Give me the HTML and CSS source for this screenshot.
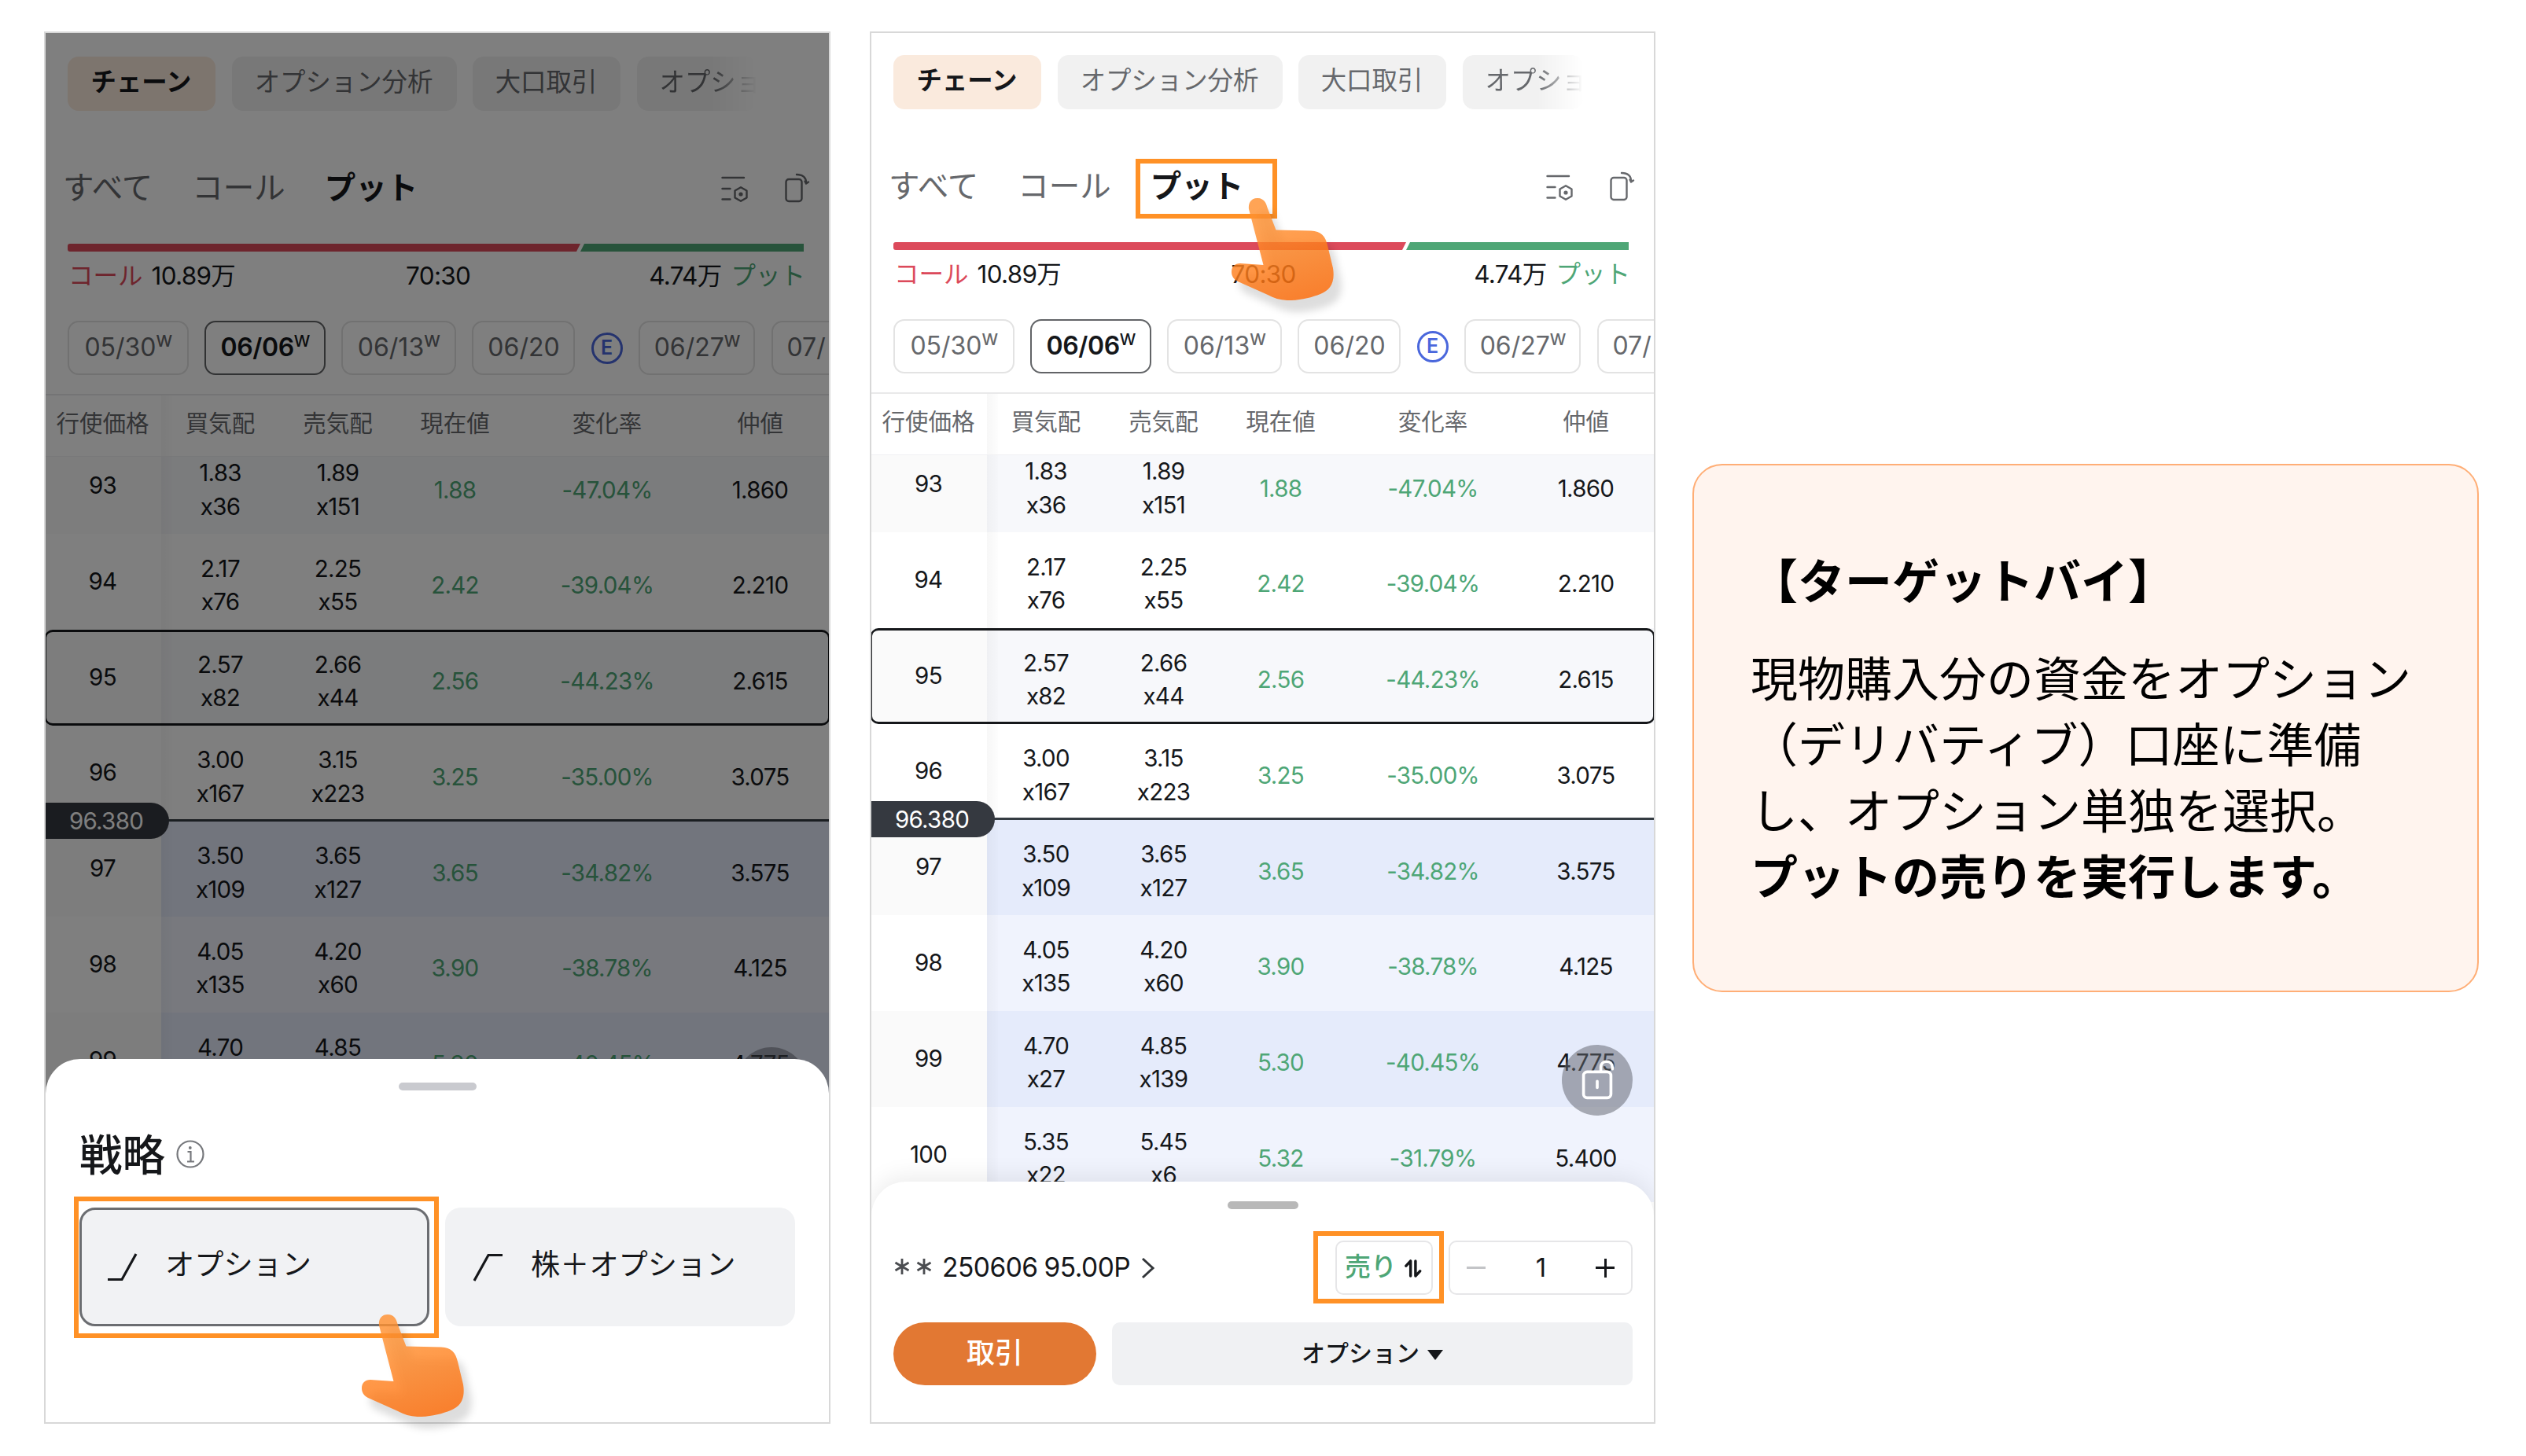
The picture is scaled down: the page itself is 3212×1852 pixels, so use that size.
FILE: index.html
```html
<!DOCTYPE html>
<html lang="ja">
<head>
<meta charset="utf-8">
<title>ターゲットバイ</title>
<link rel="stylesheet" href="styles.css">
</head>
<body>
<svg class="defs" width="0" height="0" aria-hidden="true">
  <defs>
    <linearGradient id="handFill" x1="0.3" y1="0" x2="0.6" y2="1">
      <stop offset="0.25" stop-color="#ff9030"/>
      <stop offset="1" stop-color="#ff6c08"/>
    </linearGradient>
    <symbol id="hand" viewBox="0 0 130 130">
      <path fill="url(#handFill)" fill-opacity="0.82" d="M33 0C41 0 44 6 45.500 12L56.500 40.500L101 41.500C114 42 119 48 122 60L129 89C132 108 125 117 113 122C103 126 90 129.500 76 130C65 130.500 55 128 46 123L8 106C2 103 0 98 0 94C0 87 4 83 11 83L40.500 85L22 14C21 6 25 0 33 0Z"/>
    </symbol>
    <symbol id="filter" viewBox="0 0 36 36">
      <g fill="none" stroke="currentColor" stroke-width="2.400" stroke-linecap="round"><path d="M2.500 3H30M2.500 17H12.500M2.500 30.500H12.500"/><path d="M26 15.200L33.500 19.500V28.500L26 32.800L18.500 28.500V19.500Z" stroke-linejoin="round"/></g><circle cx="26" cy="24" r="2.600" fill="currentColor"/>
    </symbol>
    <symbol id="rotate" viewBox="0 0 34 40">
      <g fill="none" stroke="currentColor" stroke-width="2.400" stroke-linecap="round" stroke-linejoin="round"><rect x="2.500" y="8" width="20" height="28" rx="3.500"/><path d="M16 2C24 2 28.500 6 28 13.500M28 13.500L31 11.500M28 13.500L26.500 10.500"/></g>
    </symbol>
    <symbol id="lock" viewBox="0 0 48 60">
      <g fill="none" stroke="#fff" stroke-width="4" stroke-linecap="round"><rect x="5" y="20" width="38" height="36" rx="5"/><path d="M29 18V14C29 3 45 3 45 14V16M24 33V42"/></g>
    </symbol>
  </defs>
</svg>
<main class="board">

<section class="stage stage-left">
  <div class="phone">
    <div class="chips"><span class="chip chip-a on">チェーン</span><span class="chip chip-b">オプション分析</span><span class="chip chip-a">大口取引</span><span class="chip chip-c">オプショ</span></div>
    <nav class="nav"><span>すべて</span><span>コール</span><span class="on">プット</span><svg class="i-filter"><use href="#filter"/></svg><svg class="i-rotate"><use href="#rotate"/></svg></nav>
    <div class="bar"><i class="bar-call"></i><i class="bar-put"></i></div>
    <div class="legend"><span><b class="red">コール</b>10.89万</span><span class="ratio">70:30</span><span>4.74万<b class="green">プット</b></span></div>
    <div class="dates"><span class="date d1">05/30<sup>W</sup></span><span class="date d1 on">06/06<sup>W</sup></span><span class="date d2">06/13<sup>W</sup></span><span class="date d3">06/20</span><span class="event">E</span><span class="date d4">06/27<sup>W</sup></span><span class="date d5">07/</span></div>
    <div class="row head"><span class="k">行使価格</span><span>買気配</span><span>売気配</span><span>現在値</span><span>変化率</span><span>仲値</span></div>
    <div class="table">
      <div class="row odd"><span class="k">93</span><span>1.83<br>x36</span><span>1.89<br>x151</span><span class="g">1.88</span><span class="g">-47.04%</span><span class="m">1.860</span></div>
      <div class="row"><span class="k">94</span><span>2.17<br>x76</span><span>2.25<br>x55</span><span class="g">2.42</span><span class="g">-39.04%</span><span class="m">2.210</span></div>
      <div class="row odd picked"><span class="k">95</span><span>2.57<br>x82</span><span>2.66<br>x44</span><span class="g">2.56</span><span class="g">-44.23%</span><span class="m">2.615</span></div>
      <div class="row"><span class="k">96</span><span>3.00<br>x167</span><span>3.15<br>x223</span><span class="g">3.25</span><span class="g">-35.00%</span><span class="m">3.075</span></div>
      <div class="row itm odd spot"><span class="k">97</span><span>3.50<br>x109</span><span>3.65<br>x127</span><span class="g">3.65</span><span class="g">-34.82%</span><span class="m">3.575</span><em class="price">96.380</em></div>
      <div class="row itm"><span class="k">98</span><span>4.05<br>x135</span><span>4.20<br>x60</span><span class="g">3.90</span><span class="g">-38.78%</span><span class="m">4.125</span></div>
      <div class="row itm odd"><span class="k">99</span><span>4.70<br>x27</span><span>4.85<br>x139</span><span class="g">5.30</span><span class="g">-40.45%</span><span class="m">4.775</span></div>
    </div>
    <div class="lock"><svg><use href="#lock"/></svg></div>
    <div class="dim"></div>
    <div class="sheet strategy">
      <i class="grip"></i>
      <h2>戦略<svg class="i-info" viewBox="0 0 36 36"><g fill="none" stroke="#77797d" stroke-width="2.200"><circle cx="18" cy="18" r="16.500"/><path d="M14.500 15H18.500V27M14 27.500H23"/></g><circle cx="17.800" cy="10" r="1.900" fill="#77797d"/></svg></h2>
      <div class="options">
        <div class="option on"><svg viewBox="0 0 38 36"><path d="M0 33.500H18L36 1"/></svg>オプション</div>
        <div class="option"><svg viewBox="0 0 38 36"><path d="M1 35L19 2.500H37"/></svg>株＋オプション</div>
      </div>
    </div>
  </div>
  <i class="mark mark-option"></i>
  <svg class="hand hand-option"><use href="#hand"/></svg>
</section>

<section class="stage stage-right">
  <div class="phone">
    <div class="chips"><span class="chip chip-a on">チェーン</span><span class="chip chip-b">オプション分析</span><span class="chip chip-a">大口取引</span><span class="chip chip-c">オプショ</span></div>
    <nav class="nav"><span>すべて</span><span>コール</span><span class="on">プット</span><svg class="i-filter"><use href="#filter"/></svg><svg class="i-rotate"><use href="#rotate"/></svg></nav>
    <div class="bar"><i class="bar-call"></i><i class="bar-put"></i></div>
    <div class="legend"><span><b class="red">コール</b>10.89万</span><span class="ratio">70:30</span><span>4.74万<b class="green">プット</b></span></div>
    <div class="dates"><span class="date d1">05/30<sup>W</sup></span><span class="date d1 on">06/06<sup>W</sup></span><span class="date d2">06/13<sup>W</sup></span><span class="date d3">06/20</span><span class="event">E</span><span class="date d4">06/27<sup>W</sup></span><span class="date d5">07/</span></div>
    <div class="row head"><span class="k">行使価格</span><span>買気配</span><span>売気配</span><span>現在値</span><span>変化率</span><span>仲値</span></div>
    <div class="table">
      <div class="row odd"><span class="k">93</span><span>1.83<br>x36</span><span>1.89<br>x151</span><span class="g">1.88</span><span class="g">-47.04%</span><span class="m">1.860</span></div>
      <div class="row"><span class="k">94</span><span>2.17<br>x76</span><span>2.25<br>x55</span><span class="g">2.42</span><span class="g">-39.04%</span><span class="m">2.210</span></div>
      <div class="row odd picked"><span class="k">95</span><span>2.57<br>x82</span><span>2.66<br>x44</span><span class="g">2.56</span><span class="g">-44.23%</span><span class="m">2.615</span></div>
      <div class="row"><span class="k">96</span><span>3.00<br>x167</span><span>3.15<br>x223</span><span class="g">3.25</span><span class="g">-35.00%</span><span class="m">3.075</span></div>
      <div class="row itm odd spot"><span class="k">97</span><span>3.50<br>x109</span><span>3.65<br>x127</span><span class="g">3.65</span><span class="g">-34.82%</span><span class="m">3.575</span><em class="price">96.380</em></div>
      <div class="row itm"><span class="k">98</span><span>4.05<br>x135</span><span>4.20<br>x60</span><span class="g">3.90</span><span class="g">-38.78%</span><span class="m">4.125</span></div>
      <div class="row itm odd"><span class="k">99</span><span>4.70<br>x27</span><span>4.85<br>x139</span><span class="g">5.30</span><span class="g">-40.45%</span><span class="m">4.775</span></div>
      <div class="row itm"><span class="k">100</span><span>5.35<br>x22</span><span>5.45<br>x6</span><span class="g">5.32</span><span class="g">-31.79%</span><span class="m">5.400</span></div>
    </div>
    <div class="lock"><svg><use href="#lock"/></svg></div>
    <div class="sheet order">
      <i class="grip"></i>
      <div class="ticket">
        <svg class="stars" viewBox="0 0 50 22"><path d="M11 1V21M2.500 6L19.500 16M19.500 6L2.500 16M39 1V21M30.500 6L47.500 16M47.500 6L30.500 16"/></svg>
        <span class="symbol">250606 95.00P</span>
        <svg class="chevron" viewBox="0 0 18 28"><path d="M2 2L15 14L2 26"/></svg>
        <div class="side">売り<svg viewBox="0 0 24 24"><path d="M2 8.500L8 2V22M14.500 2V22L20.500 15.500"/></svg></div>
        <div class="stepper"><i class="minus"></i><span>1</span><i class="plus"></i></div>
      </div>
      <div class="actions"><div class="trade">取引</div><div class="kind">オプション<i class="caret"></i></div></div>
    </div>
  </div>
  <i class="mark mark-put"></i>
  <i class="mark mark-sell"></i>
  <svg class="hand hand-put"><use href="#hand"/></svg>
</section>

<aside class="note">
  <h1>【ターゲットバイ】</h1>
  <p>現物購入分の資金をオプション<br>（デリバティブ）口座に準備<br>し、オプション単独を選択。<br><strong>プットの売りを実行します。</strong></p>
</aside>

</main>
</body>
</html>
```
FILE: styles.css
```css
* { box-sizing: border-box; }
body {
  margin: 0;
  background: #fff;
  color: #15171a;
  font-family: Inter, "Noto Sans CJK JP", sans-serif;
  line-height: 1;
}
.defs { position: absolute; }
.board {
  display: flex;
  align-items: flex-start;
  width: 3212px;
  height: 1852px;
  padding: 40px 0 0 56px;
  overflow: hidden;
}
.stage { position: relative; flex: none; }
.stage-left { width: 1000px; margin-right: 50px; }
.stage-right { width: 999px; margin-right: 47px; }
.phone {
  position: relative;
  display: flex;
  flex-direction: column;
  height: 1771px;
  padding-top: 28px;
  border: 2px solid #d8d8d8;
  overflow: hidden;
}
.stage-left .phone { padding-top: 30px; }
.phone > * { flex: none; }

/* category chips */
.chips { display: flex; gap: 20.500px; height: 69px; padding-left: 28px; }
.chip {
  display: flex;
  flex: none;
  align-items: center;
  justify-content: center;
  border-radius: 14px;
  background: #f1f1f1;
  color: #66686c;
  font-size: 32.400px;
  white-space: nowrap;
  padding: 0 1px 2px 0;
}
.chip.on { background: #faeadd; color: #15171a; font-weight: 700; }
.chip-a { width: 188px; }
.chip-b { width: 286px; }
.chip-c {
  width: 153px;
  padding-left: 29px;
  justify-content: flex-start;
  overflow: hidden;
  -webkit-mask-image: linear-gradient(90deg, #000 62%, transparent 100%);
  mask-image: linear-gradient(90deg, #000 62%, transparent 100%);
}

/* call / put tabs */
.nav {
  display: flex;
  align-items: center;
  height: 169px;
  padding: 25px 28px 0 22px;
  color: #66686c;
  font-size: 39.500px;
}
.nav span { margin: 4px 50px 0 0; }
.nav .on { color: #15171a; font-weight: 700; }
.i-filter { width: 36px; height: 36px; margin: 6px 45px 0 auto; }
.i-rotate { width: 34px; height: 40px; margin-right: -5px; margin-top: 4px; }

/* volume ratio */
.bar { display: flex; height: 10px; margin: 0 32px 0 28px; }
.bar-call { width: 652px; background: #dc4a5b; clip-path: polygon(0 0, 100% 0, calc(100% - 5px) 100%, 0 100%); border-radius: 3px 0 0 3px; }
.bar-put { flex: 1; background: #4ea676; clip-path: polygon(5px 0, 100% 0, 100% 100%, 0 100%); }
.legend {
  display: flex;
  align-items: center;
  justify-content: space-between;
  height: 61px;
  padding: 0 30px 0 29px;
  font-size: 31.500px;
  letter-spacing: -0.700px;
}
.legend b { font-weight: 400; letter-spacing: 0; }
.ratio { position: relative; left: -5px; }
.red { color: #dc4a5b; margin-right: 11px; }
.green { color: #4ea676; margin-left: 12px; }

/* expiry dates */
.dates { display: flex; align-items: center; height: 120px; padding: 27px 0 24px 28px; }
.date {
  display: flex;
  flex: none;
  align-items: center;
  justify-content: center;
  height: 69px;
  margin-right: 20.500px;
  padding: 0 0 2px 1px;
  border: 2px solid #e3e3e3;
  border-radius: 14px;
  color: #66686c;
  font-size: 32px;
}
.date sup { align-self: flex-start; margin-top: 14px; font-size: 20.500px; font-weight: 500; }
.date.on { border-color: #626467; color: #15171a; font-weight: 600; letter-spacing: -0.400px; }
.d1 { width: 153.500px; }
.d2 { width: 145.500px; }
.d3 { width: 131px; }
.d4 { width: 148px; }
.d5 { width: 131px; justify-content: flex-start; padding-left: 18px; }
.event {
  display: flex;
  flex: none;
  align-items: center;
  justify-content: center;
  width: 40px;
  height: 40px;
  margin-right: 20.500px;
  border: 3px solid #4a67dc;
  border-radius: 50%;
  color: #4a67dc;
  font-size: 25px;
  font-weight: 600;
}

/* option chain */
.row {
  position: relative;
  display: grid;
  grid-template-columns: 147px 150px 149px 149px 238px 151px 1fr;
  height: 121.800px;
  font-size: 29.500px;
  letter-spacing: -0.700px;
  line-height: 42.500px;
  text-align: center;
}
.row > span { padding-top: 23px; }
.row > .k { padding: 39px 2px 0 0; }
.row > .g { padding-top: 44.500px; color: #4ea676; }
.row > .m { padding-top: 44.500px; }
.row::before {
  content: "";
  position: absolute;
  left: 147px;
  top: 0;
  bottom: 0;
  width: 14px;
  background: linear-gradient(90deg, rgba(0, 0, 0, 0.030), rgba(0, 0, 0, 0.008));
}
.odd { background: #f7f8fb; }
.odd > .k { background: #fafafa; }
.itm { background: #f0f3fd; }
.itm.odd { background: #e5ebfb; }
.itm > .k { background: #fff; }
.itm.odd > .k { background: #fafafa; }
.row.head {
  height: 80px;
  border-top: 2px solid #e9e9ea;
  border-bottom: 1px solid #f1f1f3;
  color: #66686c;
  font-size: 29.500px;
  letter-spacing: 0;
}
.row.head > span { padding-top: 14px; }
.table { height: 960px; overflow: hidden; isolation: isolate; }
.table .row:first-child { margin-top: -24px; }
.picked::after {
  content: "";
  position: absolute;
  inset: 0 -1px -1px -1px;
  border: 3px solid #15171a;
  border-left-width: 2px;
  border-right-width: 2px;
  border-radius: 10px;
}
.spot::after {
  content: "";
  position: absolute;
  left: 147px;
  right: 0;
  top: -2px;
  height: 3px;
  background: #353c43;
}
.price {
  position: absolute;
  z-index: 1;
  left: 0;
  top: -23px;
  width: 157px;
  height: 46px;
  padding-right: 3px;
  border-radius: 0 23px 23px 0;
  background: #353940;
  color: #fff;
  font-style: normal;
  line-height: 46px;
}
.lock {
  position: absolute;
  left: 878px;
  top: 1287px;
  display: flex;
  justify-content: center;
  width: 90px;
  height: 90px;
  padding-top: 16px;
  border-radius: 50%;
  background: rgba(98, 102, 112, 0.520);
}
.stage-left .lock { top: 1290px; }
.lock svg { width: 48px; height: 55px; }
.dim { position: absolute; inset: 0; background: rgba(0, 0, 0, 0.500); }

/* bottom sheets */
.sheet {
  position: absolute;
  left: 0;
  right: 0;
  bottom: 0;
  display: flex;
  flex-direction: column;
  align-items: center;
  border-radius: 44px 44px 0 0;
  background: #fff;
}
.grip { flex: none; border-radius: 5px; }
.strategy { height: 462px; padding-top: 30px; }
.strategy .grip { width: 99px; height: 10px; background: #c9cacf; }
.strategy h2 {
  display: flex;
  align-items: center;
  align-self: flex-start;
  height: 60px;
  margin: 52px 0 0 43px;
  font-size: 54.500px;
  font-weight: 500;
}
.i-info { width: 36px; height: 36px; margin: 0 0 3px 14px; }
.options { display: flex; gap: 20px; align-self: flex-start; margin: 37px 0 0 43px; }
.option {
  display: flex;
  align-items: center;
  width: 445px;
  height: 151px;
  padding: 0 0 5px 36px;
  border-radius: 20px;
  background: #f1f2f4;
  font-size: 37.200px;
}
.option.on { padding: 0 0 5px 33px; border: 3px solid #6b6d71; }
.option svg { width: 38px; height: 36px; margin: 6px 35px 0 0; fill: none; stroke: #15171a; stroke-width: 3.200; }

.order { height: 306px; padding-top: 25px; box-shadow: 0 -6px 30px rgba(0, 0, 0, 0.080); }
.order .grip { width: 90px; height: 10px; background: #b8b8b8; }
.ticket { display: flex; align-items: center; align-self: stretch; height: 69px; margin: 40px 27px 0 28px; }
.stars { width: 50px; height: 22px; margin-bottom: 3px; fill: none; stroke: #4a4c50; stroke-width: 2.800; }
.symbol { margin-left: 12px; font-size: 33.500px; letter-spacing: -0.500px; word-spacing: -1px; }
.chevron { width: 18px; height: 28px; margin-left: 14px; fill: none; stroke: #33363a; stroke-width: 3; }
.side, .stepper { display: flex; align-items: center; height: 69px; border: 2px solid #e6e6e8; border-radius: 10px; }
.side { width: 124px; margin-left: auto; padding: 0 0 3px 10px; color: #4ea676; font-size: 33px; font-weight: 500; }
.side svg { width: 23px; height: 23px; margin: 5px 0 0 10px; fill: none; stroke: #15171a; stroke-width: 3.600; stroke-linecap: round; stroke-linejoin: round; }
.stepper { width: 234px; margin-left: 20px; padding: 0 21px; justify-content: space-between; font-size: 33px; }
.minus { width: 24px; height: 3px; background: #c3c4c7; }
.plus {
  width: 24px;
  height: 24px;
  background: linear-gradient(#15171a, #15171a) center / 24px 3px no-repeat, linear-gradient(#15171a, #15171a) center / 3px 24px no-repeat;
}
.stepper span { padding-left: 1px; }
.actions { display: flex; gap: 20px; align-self: stretch; margin: 35px 27px 0 28px; }
.trade, .kind { display: flex; align-items: center; justify-content: center; height: 80px; }
.trade { width: 258px; border-radius: 40px; background: #e27833; color: #fff; font-size: 36px; font-weight: 500; padding-bottom: 2px; }
.kind { flex: 1; border-radius: 10px; background: #f0f1f3; font-size: 30px; font-weight: 500; padding-bottom: 2px; }
.caret { margin: 5px 0 0 10px; border: 10px solid transparent; border-top: 13px solid #15171a; border-bottom: 0; }

/* callouts */
.mark { position: absolute; border: 6px solid #ff9126; }
.mark-option { left: 38px; top: 1482px; width: 464px; height: 180px; }
.mark-put { left: 338px; top: 162px; width: 180px; height: 76px; }
.mark-sell { left: 564px; top: 1526px; width: 166px; height: 92px; }
.hand { position: absolute; width: 130px; height: 130px; overflow: visible; filter: drop-shadow(10px 15px 5px rgba(0, 0, 0, 0.160)); }
.hand-option { left: 404px; top: 1632px; }
.hand-put { left: 460px; top: 212px; }

/* explanation card */
.note {
  flex: none;
  width: 1000px;
  height: 672px;
  margin-top: 550px;
  padding: 102px 0 0 72px;
  border: 2px solid #ffae76;
  border-radius: 38px;
  background: #fff4ee;
  color: #000;
  font-family: "Noto Sans CJK JP", sans-serif;
  font-size: 60px;
  line-height: 84px;
  white-space: nowrap;
  text-spacing-trim: space-all;
}
.note h1 { margin: 0; font-size: 60px; font-weight: 700; }
.note p { margin: 40px 0 0; }
.note strong { font-weight: 700; }
```
